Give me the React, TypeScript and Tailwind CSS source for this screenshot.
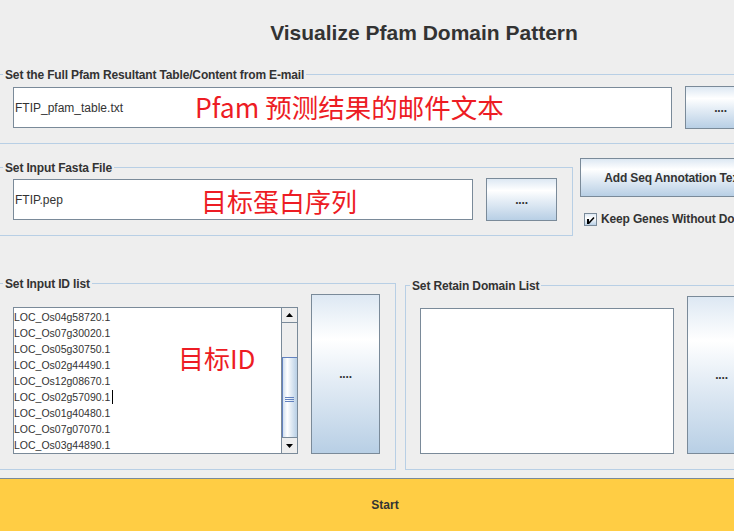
import clsx from "clsx";

const ids = [
  "LOC_Os04g58720.1",
  "LOC_Os07g30020.1",
  "LOC_Os05g30750.1",
  "LOC_Os02g44490.1",
  "LOC_Os12g08670.1",
  "LOC_Os02g57090.1",
  "LOC_Os01g40480.1",
  "LOC_Os07g07070.1",
  "LOC_Os03g44890.1",
];

function Legend({ children, className }: { children: React.ReactNode; className?: string }) {
  return (
    <div
      className={clsx(
        "-mt-[7px] h-[14px] w-fit whitespace-nowrap bg-[#eeeeee] px-[2px] text-[12px] font-bold leading-[14px] tracking-[-0.15px]",
        className
      )}
    >
      {children}
    </div>
  );
}

function MetalButton({ className, children }: { className?: string; children: React.ReactNode }) {
  return (
    <button
      className={clsx(
        "flex shrink-0 items-center justify-center whitespace-nowrap border border-[#7a8a99] bg-[linear-gradient(180deg,#dde8f3_0%,#ffffff_28%,#e3ecf5_55%,#b8cfe5_100%)] text-[12px] font-bold tracking-[-0.15px] text-[#333333]",
        className
      )}
    >
      {children}
    </button>
  );
}

function Scrollbar() {
  return (
    <div className="flex w-[16px] shrink-0 flex-col border-l border-[#7a8a99] bg-[#eeeeee]">
      <div className="flex h-[15px] items-center justify-center border-b border-[#7a8a99]">
        <svg width="7" height="4" viewBox="0 0 7 4">
          <polygon points="3.5,0 7,4 0,4" fill="#000" />
        </svg>
      </div>
      <div className="flex-1" />
      <div className="flex h-[80px] flex-col items-center justify-center gap-px border-t border-[#6382bf] bg-[linear-gradient(90deg,#c5d7ea_0%,#ffffff_35%,#dde8f3_65%,#b8cfe5_100%)] pt-[3px] shadow-[inset_1px_0_0_#6382bf]">
        <div className="h-px w-[9px] bg-[#6382bf]" />
        <div className="h-px w-[9px] bg-[#6382bf]" />
        <div className="h-px w-[9px] bg-[#6382bf]" />
      </div>
      <div className="flex h-[16px] items-center justify-center border-t border-[#7a8a99]">
        <svg width="7" height="4" viewBox="0 0 7 4">
          <polygon points="0,0 7,0 3.5,4" fill="#000" />
        </svg>
      </div>
    </div>
  );
}

export default function App() {
  return (
    <div className="relative h-[531px] w-[734px] overflow-hidden bg-[#eeeeee] font-['Liberation_Sans',Arial,sans-serif] text-[#333333]">
      <div className="flex w-[770px] flex-col">
        <h1 className="w-[848px] pt-[21px] text-center text-[21px] font-bold leading-[24px]">
          Visualize Pfam Domain Pattern
        </h1>

        <div className="-ml-px mt-[29px] h-[70px] w-[800px] border border-[#b8cfe5]">
          <Legend className="ml-[3px]">Set the Full Pfam Resultant Table/Content from E-mail</Legend>
          <div className="mt-[4px] flex items-center pl-[13px]">
            <div className="flex h-[41px] w-[659px] items-center border border-[#7a8a99] bg-white pl-px text-[12px]">
              FTIP_pfam_table.txt
            </div>
            <MetalButton className="ml-[13px] h-[43px] w-[71px]">....</MetalButton>
          </div>
        </div>

        <div className="mt-[14px] flex items-start">
          <div className="-ml-px mt-[9px] h-[69px] w-[574px] shrink-0 border border-[#b8cfe5]">
            <Legend className="ml-[3px]">Set Input Fasta File</Legend>
            <div className="mt-[3px] flex items-center pl-[13px]">
              <div className="flex h-[41px] w-[460px] items-center border border-[#7a8a99] bg-white pl-px text-[12px]">
                FTIP.pep
              </div>
              <MetalButton className="ml-[13px] h-[43px] w-[71px]">....</MetalButton>
            </div>
          </div>
          <div className="ml-[7px] flex flex-col">
            <MetalButton className="h-[39px] w-[187px]">Add Seq Annotation Text</MetalButton>
            <label className="ml-[4px] mt-[15px] flex items-center gap-[4px] whitespace-nowrap text-[12px] font-bold leading-[14px] tracking-[-0.15px]">
              <span className="flex h-[13px] w-[13px] items-center justify-center border border-[#7a8a99] bg-[linear-gradient(180deg,#dde8f3_0%,#ffffff_40%,#b8cfe5_100%)]">
                <svg width="11" height="11" viewBox="0 0 11 11">
                  <rect x="2" y="5" width="2" height="5" fill="#000" />
                  <path d="M3.5 9.5 L9 3.5" stroke="#000" strokeWidth="1.6" />
                </svg>
              </span>
              Keep Genes Without Domain
            </label>
          </div>
        </div>

        <div className="mt-[47px] flex items-start">
          <div className="-ml-px h-[187px] w-[397px] shrink-0 border border-[#b8cfe5]">
            <Legend className="ml-[3px]">Set Input ID list</Legend>
            <div className="mt-[3px] flex items-start pl-[13px]">
              <div className="mt-[13px] flex h-[147px] w-[285px] border border-[#7a8a99] bg-white">
                <div className="flex-1 pt-px text-[10.5px] leading-[16px]">
                  {ids.map((id, i) => (
                    <div key={id} className="flex items-center">
                      {id}
                      {i === 5 && <span className="ml-[2px] inline-block h-[14px] w-px bg-black" />}
                    </div>
                  ))}
                </div>
                <Scrollbar />
              </div>
              <MetalButton className="ml-[13px] h-[160px] w-[69px]">....</MetalButton>
            </div>
          </div>

          <div className="ml-[9px] mt-[2px] h-[185px] w-[360px] shrink-0 border border-[#b8cfe5]">
            <Legend className="ml-[4px]">Set Retain Domain List</Legend>
            <div className="mt-[3px] flex items-start pl-[14px]">
              <div className="mt-[12px] h-[146px] w-[254px] border border-[#7a8a99] bg-white" />
              <MetalButton className="ml-[13px] h-[158px] w-[69px]">....</MetalButton>
            </div>
          </div>
        </div>

        <div className="mt-[8px] flex h-[53px] items-center justify-center border-t border-[#7a8a99] bg-[#ffcd44] text-[12px] font-bold">
          Start
        </div>
      </div>

      <div className="absolute left-[195px] top-[94px] whitespace-nowrap font-['Noto_Sans_CJK_SC',sans-serif] text-[26.5px] leading-[26px] text-[#ed1c24]">
        Pfam 预测结果的邮件文本
      </div>
      <div className="absolute left-[201px] top-[188px] whitespace-nowrap font-['Noto_Sans_CJK_SC',sans-serif] text-[26px] leading-[26px] text-[#ed1c24]">
        目标蛋白序列
      </div>
      <div className="absolute left-[178px] top-[345px] whitespace-nowrap font-['Noto_Sans_CJK_SC',sans-serif] text-[26px] leading-[26px] text-[#ed1c24]">
        目标ID
      </div>
    </div>
  );
}
